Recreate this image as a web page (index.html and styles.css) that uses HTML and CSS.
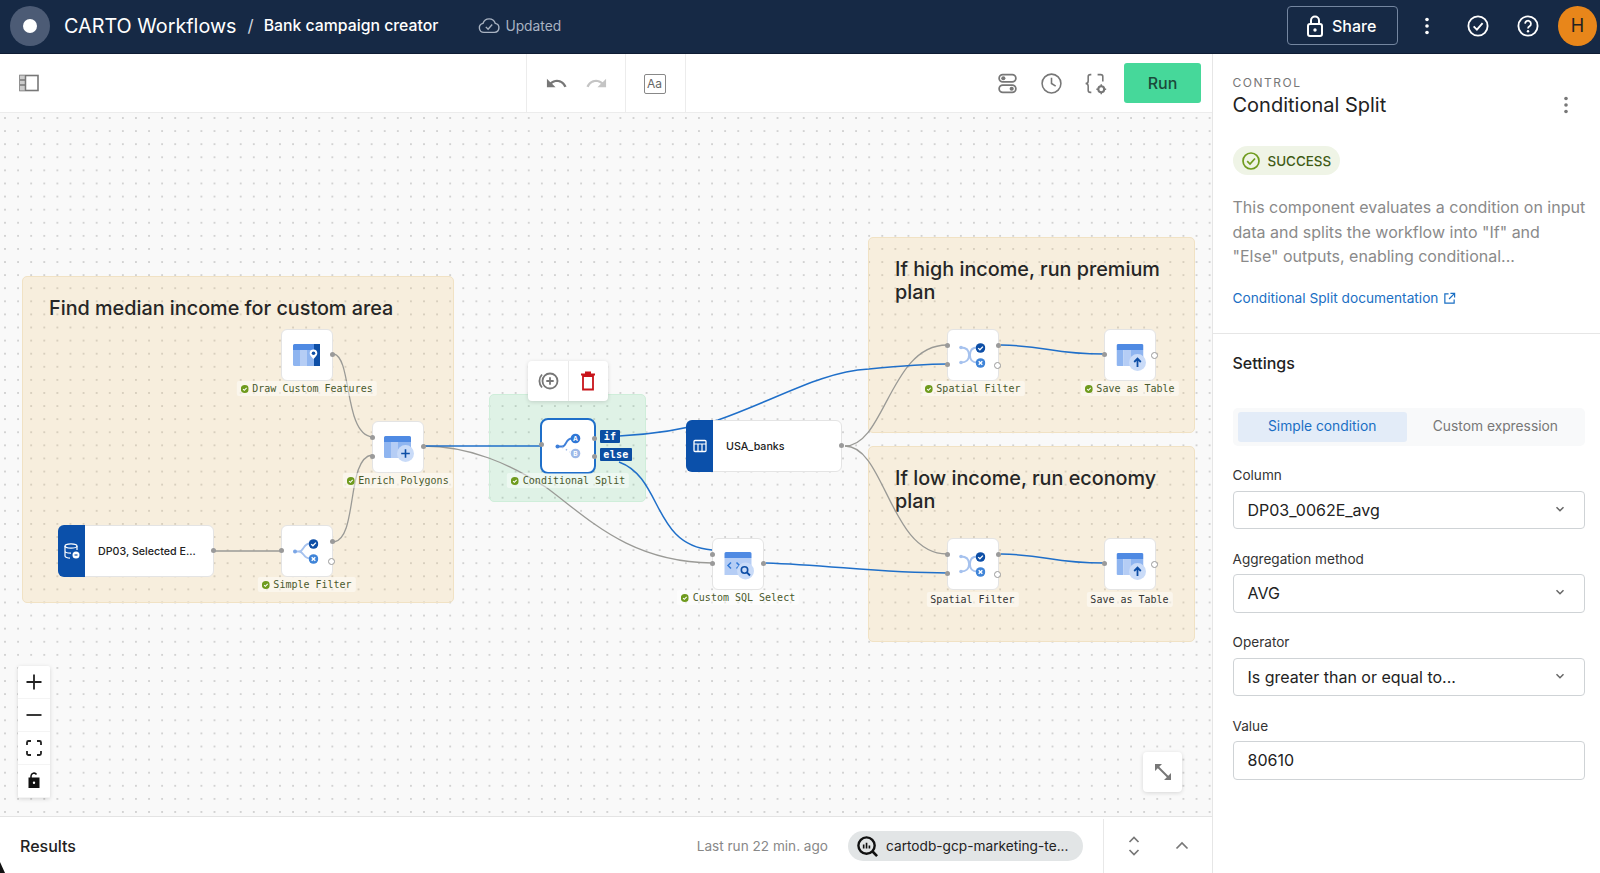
FILE: index.html
```html
<!DOCTYPE html>
<html lang="en">
<head>
<meta charset="utf-8">
<title>CARTO Workflows</title>
<link rel="stylesheet" href="styles.css">
</head>
<body>
<svg class="defs" width="0" height="0" aria-hidden="true">
  <defs>
    <symbol id="ok" viewBox="0 0 10 10"><circle cx="5" cy="5" r="5" fill="#6f9b1e"/><path d="M2.8 5.1 4.4 6.7 7.3 3.6" fill="none" stroke="#fff" stroke-width="1.3"/></symbol>
    <symbol id="table" viewBox="0 0 27 22"><path d="M1.5 0h24A1.5 1.5 0 0 1 27 1.5V6H0V1.500A1.500 1.500 0 0 1 1.500 0z" fill="#4f8ae3"/><path d="M0 6h7v16H1.500A1.500 1.500 0 0 1 0 20.500z" fill="#8fb5f0"/><path d="M7 6h7v16H7z" fill="#b5cdf5"/><path d="M14 6h13v14.500a1.500 1.500 0 0 1-1.500 1.500H14z" fill="#8fb5f0"/></symbol>
    <symbol id="chev" viewBox="0 0 12 12"><path d="M2.500 4.200 6 7.700l3.500-3.500" fill="none" stroke="#666" stroke-width="1.500"/></symbol>
    <symbol id="filtercheck" viewBox="0 0 10 10"><circle cx="5" cy="5" r="4.800" fill="#0d4ea6"/><path d="M2.700 5.100 4.400 6.800 7.400 3.600" fill="none" stroke="#fff" stroke-width="1.300"/></symbol>
    <symbol id="filterx" viewBox="0 0 10 10"><circle cx="5" cy="5" r="4.800" fill="#3f84d8"/><path d="M3.200 3.200 6.800 6.800M6.800 3.200 3.200 6.800" fill="none" stroke="#fff" stroke-width="1.400"/></symbol>
    <symbol id="spatial" viewBox="0 0 32 32"><path d="M4 8.500C10 8.500 12 11 12 16S10 23.500 4 23.500M20 8.500C15 8.500 13 11 13 16S15 23.500 20 23.500" fill="none" stroke="#a6c2ee" stroke-width="1.800"/><circle cx="4" cy="8.500" r="1.800" fill="#a6c2ee"/><circle cx="4" cy="23.500" r="1.800" fill="#a6c2ee"/><use href="#filtercheck" x="18.500" y="4" width="10" height="10"/><use href="#filterx" x="18.500" y="19" width="10" height="10"/></symbol>
    <symbol id="save" viewBox="0 0 32 32"><use href="#table" x="2.500" y="5" width="27" height="22"/><circle cx="23.500" cy="23.500" r="8.500" fill="#c9dbf8"/><path d="M23.500 28v-8M20.200 23 23.500 19.600 26.800 23" fill="none" stroke="#0d4ea6" stroke-width="1.800"/></symbol>
  </defs>
</svg>

<div class="app">
  <header class="topbar">
    <div class="logo"><span class="logo-dot"></span></div>
    <span class="app-name">CARTO Workflows</span>
    <span class="slash">/</span>
    <span class="wf-name">Bank campaign creator</span>
    <span class="status">
      <svg class="status-icon" viewBox="0 0 24 18"><path d="M6.500 16.500A5 5 0 0 1 5.500 6.600 7 7 0 0 1 18.800 6.600 5 5 0 0 1 18 16.500z" fill="none" stroke="#a9b3c2" stroke-width="1.500"/><path d="M8.500 10.500 11 13l4.500-5" fill="none" stroke="#a9b3c2" stroke-width="1.500"/></svg>
      Updated
    </span>
    <div class="top-actions">
      <div class="share">
        <svg class="share-icon" viewBox="0 0 20 24"><path d="M6 10V6.500a4 4 0 0 1 8 0V10" fill="none" stroke="#fff" stroke-width="2"/><rect x="3" y="10" width="14" height="12" rx="2" fill="none" stroke="#fff" stroke-width="2"/><circle cx="10" cy="16" r="1.700" fill="#fff"/></svg>
        <span>Share</span>
      </div>
      <svg class="top-dots" viewBox="0 0 6 20"><circle cx="3" cy="3.500" r="1.800" fill="#fff"/><circle cx="3" cy="10" r="1.800" fill="#fff"/><circle cx="3" cy="16.500" r="1.800" fill="#fff"/></svg>
      <svg class="top-icon" viewBox="0 0 22 22"><circle cx="11" cy="11" r="8.800" fill="none" stroke="#fff" stroke-width="1.700"/><path d="M7 11.300 10 14.300 15.200 8.300" fill="none" stroke="#fff" stroke-width="1.700"/></svg>
      <svg class="top-icon" viewBox="0 0 22 22"><circle cx="11" cy="11" r="8.800" fill="none" stroke="#fff" stroke-width="1.700"/><path d="M8.300 8.800A2.700 2.700 0 1 1 12.400 11.200C11.400 11.800 11 12.300 11 13.300" fill="none" stroke="#fff" stroke-width="1.600"/><circle cx="11" cy="15.800" r="1.100" fill="#fff"/></svg>
      <div class="avatar">H</div>
    </div>
  </header>

  <div class="main">
    <div class="work">
      <div class="toolbar">
        <div class="tb-left">
          <svg class="tb-side" viewBox="0 0 20 18"><rect x="1" y="1.500" width="18" height="15" fill="none" stroke="#777" stroke-width="1.600"/><rect x="1" y="1.500" width="5" height="15" fill="#ccc"/><path d="M6.500 1.500v15" stroke="#777" stroke-width="1.500"/><path d="M1 6h5M1 11h5" stroke="#777" stroke-width="1.300"/></svg>
        </div>
        <div class="tb-history">
          <svg class="tb-icon" viewBox="0 0 24 24"><path fill="#777" d="M12.500 8c-2.650 0-5.050.99-6.900 2.600L2 7v9h9l-3.620-3.620c1.390-1.160 3.160-1.880 5.120-1.880 3.540 0 6.550 2.310 7.600 5.500l2.370-.78C21.080 11.030 17.150 8 12.500 8z"/></svg>
          <svg class="tb-icon" viewBox="0 0 24 24"><path fill="#c4c4c4" d="M18.400 10.600C16.550 8.990 14.150 8 11.500 8c-4.650 0-8.580 3.030-9.960 7.220L3.900 16c1.050-3.190 4.050-5.500 7.600-5.500 1.950 0 3.730.72 5.120 1.880L13 16h9V7l-3.600 3.600z"/></svg>
        </div>
        <div class="tb-text"><span class="aa">Aa</span></div>
        <div class="tb-right">
          <svg class="tb-icon" viewBox="0 0 22 22"><rect x="3" y="2.500" width="16" height="7" rx="3.500" fill="none" stroke="#777" stroke-width="1.700"/><rect x="3" y="12.500" width="16" height="7" rx="3.500" fill="none" stroke="#777" stroke-width="1.700"/><circle cx="7" cy="6" r="2" fill="#777"/><circle cx="15" cy="16" r="2" fill="#777"/></svg>
          <svg class="tb-icon" viewBox="0 0 22 22"><circle cx="11" cy="11" r="9" fill="none" stroke="#777" stroke-width="1.500"/><path d="M11 5.500V11l4 2.500" fill="none" stroke="#777" stroke-width="1.500"/></svg>
          <svg class="tb-icon" viewBox="0 0 22 22"><path d="M7 2.500H6C4.500 2.500 4 3.300 4 4.500V8.500C4 10 3 11 1.500 11 3 11 4 12 4 13.500V17.500C4 18.700 4.500 19.500 6 19.500H7M13 2.500H16C17.500 2.500 18 3.300 18 4.500V9" fill="none" stroke="#777" stroke-width="1.500"/><circle cx="16.500" cy="16.500" r="2.800" fill="none" stroke="#777" stroke-width="2"/><path d="M16.500 11.800v2M16.500 19.200v2M11.800 16.500h2M19.200 16.500h2" stroke="#777" stroke-width="1.400"/></svg>
          <div class="run">Run</div>
        </div>
      </div>

      <div class="canvas">
        <div class="group g-income"><h3>Find median income for custom area</h3></div>
        <div class="group g-high"><h3>If high income, run premium plan</h3></div>
        <div class="group g-low"><h3>If low income, run economy plan</h3></div>
        <div class="selection"></div>

        <svg class="edges" viewBox="0 113 1212 704" width="1212" height="704">
          <g class="edge-grey">
            <path d="M334 354C352 358 344 434 372 437"/>
            <path d="M334 542C358 538 346 458 372 455"/>
            <path d="M213 551H281"/>
            <path d="M423 446C470 446 510 464 547 488 C590 520 630 562 712 563"/>
            <path d="M845 446C885 446 890 345 947 345"/>
            <path d="M845 446C885 446 890 554 947 554"/>
          </g>
          <g class="edge-blue">
            <path d="M423 446H540"/>
            <path d="M619 436C660 434 690 428 718 420C780 398 820 372 869 369C900 366 925 364 947 364"/>
            <path d="M619 462C663 478 652 545 712 550"/>
            <path d="M766 563C830 565 880 573 947 573"/>
            <path d="M1001 345C1050 346 1050 354 1104 354"/>
            <path d="M1001 554C1050 555 1050 563 1104 563"/>
          </g>
        </svg>

        <div class="node n-draw">
          <svg class="nicon" viewBox="0 0 32 32"><use href="#table" x="2" y="5" width="27" height="22"/><rect x="23" y="5" width="6" height="22" fill="#0d4ea6"/><path d="M22.500 10.500a3.800 3.800 0 0 1 3.800 3.800c0 2.400-3.800 5.700-3.800 5.700s-3.800-3.300-3.800-5.700a3.800 3.800 0 0 1 3.800-3.800z" fill="#fff"/><circle cx="22.500" cy="14.300" r="1.800" fill="#0d4ea6"/></svg>
          <i class="port pr pm"></i>
          <div class="nlabel"><svg class="okic"><use href="#ok"/></svg>Draw Custom Features</div>
        </div>

        <div class="node n-enrich">
          <svg class="nicon" viewBox="0 0 32 32"><use href="#table" x="2" y="5" width="27" height="22"/><circle cx="23.500" cy="22.500" r="8.500" fill="#c9dbf8"/><path d="M23.500 18.200v8.600M19.200 22.500h8.600" stroke="#0d4ea6" stroke-width="1.600"/></svg>
          <i class="port pl pa"></i><i class="port pl pb"></i><i class="port pr pm"></i>
          <div class="nlabel"><svg class="okic"><use href="#ok"/></svg>Enrich Polygons</div>
        </div>

        <div class="node n-simple">
          <svg class="nicon" viewBox="0 0 32 32"><path d="M3.500 16.500H8C13 16.500 12 8.500 19 8.500M8 16.500C13 16.500 12 23.500 19 23.500" fill="none" stroke="#a6c2ee" stroke-width="1.800"/><circle cx="4" cy="16.500" r="2" fill="#7ba6e6"/><use href="#filtercheck" x="17.500" y="4" width="10" height="10"/><use href="#filterx" x="17.500" y="19" width="10" height="10"/></svg>
          <i class="port pl pm"></i><i class="port pr pa"></i><i class="port-open pr pb"></i>
          <div class="nlabel"><svg class="okic"><use href="#ok"/></svg>Simple Filter</div>
        </div>

        <div class="node node-wide n-dp03">
          <div class="nside">
            <svg class="side-db" viewBox="0 0 16 16"><ellipse cx="7" cy="3" rx="6" ry="2.200" fill="none" stroke="#fff" stroke-width="1.200"/><path d="M1 3v10c0 1.200 2.700 2.200 5 2.200M13 3v4M1 8c0 1.200 2.700 2.200 6 2.200" fill="none" stroke="#fff" stroke-width="1.200"/><circle cx="12" cy="12" r="3.500" fill="#fff"/><path d="M10.500 12h3" stroke="#0b50aa" stroke-width="1.200"/></svg>
          </div>
          <span class="ntitle">DP03, Selected E...</span>
          <i class="port pr pm"></i>
        </div>

        <div class="node n-split">
          <svg class="nicon" viewBox="0 0 32 32"><path d="M6 16.500H10C15 16.500 13 8.500 20 8.500" fill="none" stroke="#3e7fd9" stroke-width="1.800"/><path d="M10 17 18 22" fill="none" stroke="#9db9e8" stroke-width="1.400" stroke-dasharray="1.500 3"/><circle cx="5.500" cy="16.500" r="2" fill="#3e7fd9"/><circle cx="23.500" cy="8.500" r="4.800" fill="#2f77d6"/><circle cx="23.500" cy="23.500" r="4.800" fill="#9db9e8"/><text class="ab" x="23.500" y="10.800">A</text><text class="ab" x="23.500" y="25.800">B</text></svg>
          <i class="port pl pm"></i>
          <i class="port pr pif"></i><i class="port pr pelse"></i>
          <span class="tag tag-if">if</span>
          <span class="tag tag-else">else</span>
          <div class="nlabel"><svg class="okic"><use href="#ok"/></svg>Conditional Split</div>
        </div>

        <div class="popover">
          <div class="pop-cell">
            <svg class="pop-icon" viewBox="0 0 24 24"><circle cx="14" cy="12" r="7.500" fill="none" stroke="#777" stroke-width="1.800"/><path d="M14 8.300v7.400M10.300 12h7.400" stroke="#777" stroke-width="1.800"/><path d="M6 5.500a9.500 9.500 0 0 0 0 13" fill="none" stroke="#777" stroke-width="1.800"/></svg>
          </div>
          <div class="pop-cell pop-del">
            <svg class="pop-icon" viewBox="0 0 24 24"><path d="M7 7h10v13.500H7z" fill="none" stroke="#c8141a" stroke-width="1.800"/><path d="M5 5.500h14M9 3.500h6" stroke="#c8141a" stroke-width="1.800"/></svg>
          </div>
        </div>

        <div class="node node-wide n-usa">
          <div class="nside">
            <svg class="side-table" viewBox="0 0 14 14"><rect x="1" y="1.500" width="12" height="11" rx="1" fill="none" stroke="#fff" stroke-width="1.300"/><path d="M1 5h12M5 5v7.500M9 5v7.500" stroke="#fff" stroke-width="1.200"/></svg>
          </div>
          <span class="ntitle">USA_banks</span>
          <i class="port pr pm"></i>
        </div>

        <div class="node n-sql">
          <svg class="nicon" viewBox="0 0 32 32"><path d="M2.500 5.500a1.500 1.500 0 0 1 1.500-1.500h24a1.500 1.500 0 0 1 1.500 1.500V10h-27z" fill="#4f8ae3"/><rect x="2.500" y="10" width="27" height="17" fill="#b5cdf5"/><path d="M9 14.500 6 17.500 9 20.500M14.500 14.500 17.500 17.500 14.500 20.500" fill="none" stroke="#2f77d6" stroke-width="1.500"/><circle cx="23.500" cy="23" r="8.500" fill="#c9dbf8"/><circle cx="22.500" cy="22" r="3.200" fill="none" stroke="#0d4ea6" stroke-width="1.600"/><path d="M25 24.500 28 27.500" stroke="#0d4ea6" stroke-width="1.800"/></svg>
          <i class="port pl pa"></i><i class="port pl pm"></i><i class="port pr pm"></i>
          <div class="nlabel"><svg class="okic"><use href="#ok"/></svg>Custom SQL Select</div>
        </div>

        <div class="node n-spatial1">
          <svg class="nicon"><use href="#spatial"/></svg>
          <i class="port pl pa"></i><i class="port pl pb"></i><i class="port pr pa"></i><i class="port-open pr pb"></i>
          <div class="nlabel"><svg class="okic"><use href="#ok"/></svg>Spatial Filter</div>
        </div>
        <div class="node n-save1">
          <svg class="nicon"><use href="#save"/></svg>
          <i class="port pl pm"></i><i class="port-open pr pm"></i>
          <div class="nlabel"><svg class="okic"><use href="#ok"/></svg>Save as Table</div>
        </div>
        <div class="node n-spatial2">
          <svg class="nicon"><use href="#spatial"/></svg>
          <i class="port pl pa"></i><i class="port pl pb"></i><i class="port pr pa"></i><i class="port-open pr pb"></i>
          <div class="nlabel">Spatial Filter</div>
        </div>
        <div class="node n-save2">
          <svg class="nicon"><use href="#save"/></svg>
          <i class="port pl pm"></i><i class="port-open pr pm"></i>
          <div class="nlabel">Save as Table</div>
        </div>

        <div class="zoomctl">
          <div class="zcell"><svg class="zicon" viewBox="0 0 18 18"><path d="M9 1.500v15M1.500 9h15" stroke="#222" stroke-width="1.800"/></svg></div>
          <div class="zcell"><svg class="zicon" viewBox="0 0 18 18"><path d="M1.500 9h15" stroke="#222" stroke-width="1.800"/></svg></div>
          <div class="zcell"><svg class="zicon" viewBox="0 0 18 18"><path d="M2 6V3.500A1.500 1.500 0 0 1 3.500 2H6M12 2h2.500A1.500 1.500 0 0 1 16 3.500V6M16 12v2.500a1.500 1.500 0 0 1-1.500 1.500H12M6 16H3.500A1.500 1.500 0 0 1 2 14.500V12" fill="none" stroke="#222" stroke-width="1.800"/></svg></div>
          <div class="zcell"><svg class="zicon" viewBox="0 0 18 18"><path d="M6 6V4a3 3 0 0 1 5.500-1.500" fill="none" stroke="#111" stroke-width="1.500"/><path fill-rule="evenodd" d="M3.500 5.500h11v10.500h-11zM9 9.500a1.200 1.200 0 1 0 0 2.400 1.200 1.200 0 0 0 0-2.400z" fill="#111"/></svg></div>
        </div>
        <div class="expand">
          <svg class="expand-icon" viewBox="0 0 20 20"><path d="M3 3 17 17" stroke="#777" stroke-width="2"/><path d="M2 9V2h7zM18 11v7h-7z" fill="#777"/></svg>
        </div>
      </div>

      <div class="results">
        <span class="res-title">Results</span>
        <span class="res-time">Last run 22 min. ago</span>
        <div class="conn">
          <svg class="conn-icon" viewBox="0 0 24 24"><circle cx="11" cy="11" r="8.500" fill="none" stroke="#111" stroke-width="2.500"/><path d="M17 17 22 22" stroke="#111" stroke-width="2.800"/><path d="M8 10v4M11 8v6M14 11v3" stroke="#111" stroke-width="1.700"/></svg>
          <span>cartodb-gcp-marketing-te...</span>
        </div>
        <div class="res-actions">
          <svg class="res-icon" viewBox="0 0 16 22"><path d="M3.500 7 8 2.500 12.500 7M3.500 15 8 19.500 12.500 15" fill="none" stroke="#777" stroke-width="1.700"/></svg>
          <svg class="res-icon" viewBox="0 0 16 22"><path d="M2.500 13.500 8 8 13.500 13.500" fill="none" stroke="#777" stroke-width="1.700"/></svg>
        </div>
      </div>
    </div>

    <aside class="panel">
      <div class="panel-info">
        <div class="eyebrow">CONTROL</div>
        <div class="panel-head">
          <div class="panel-title">Conditional Split</div>
          <svg class="panel-dots" viewBox="0 0 6 20"><circle cx="3" cy="3.500" r="1.800" fill="#777"/><circle cx="3" cy="10" r="1.800" fill="#777"/><circle cx="3" cy="16.500" r="1.800" fill="#777"/></svg>
        </div>
        <div class="chip">
          <svg class="chip-icon" viewBox="0 0 20 20"><circle cx="10" cy="10" r="8" fill="none" stroke="#6f9b1e" stroke-width="1.700"/><path d="M6.200 10.200 9 13 14 7.500" fill="none" stroke="#6f9b1e" stroke-width="1.700"/></svg>
          SUCCESS
        </div>
        <p class="desc">This component evaluates a condition on input data and splits the workflow into "If" and "Else" outputs, enabling conditional...</p>
        <div class="doc-link">Conditional Split documentation
          <svg class="doc-icon" viewBox="0 0 14 14"><path d="M6 2H2v10h10V8M8 1.500h4.500V6M12.300 1.700 6.500 7.500" fill="none" stroke="#1a6fc4" stroke-width="1.300"/></svg>
        </div>
      </div>
      <div class="settings">
        <div class="settings-title">Settings</div>
        <div class="segment">
          <div class="seg seg-on">Simple condition</div>
          <div class="seg">Custom expression</div>
        </div>
        <div class="field">
          <div class="flabel">Column</div>
          <div class="control">DP03_0062E_avg<svg class="chev"><use href="#chev"/></svg></div>
        </div>
        <div class="field">
          <div class="flabel">Aggregation method</div>
          <div class="control">AVG<svg class="chev"><use href="#chev"/></svg></div>
        </div>
        <div class="field">
          <div class="flabel">Operator</div>
          <div class="control">Is greater than or equal to...<svg class="chev"><use href="#chev"/></svg></div>
        </div>
        <div class="field">
          <div class="flabel">Value</div>
          <div class="control">80610</div>
        </div>
      </div>
    </aside>
  </div>
  <div class="corner"></div>
</div>
</body>
</html>
```

FILE: styles.css
```css
* { box-sizing: border-box; }
html, body { margin: 0; padding: 0; height: 873px; overflow: hidden; }
body { font-family: Inter, "Liberation Sans", sans-serif; color: #222; background: #fff; }
.defs { position: absolute; }

.app { position: relative; display: flex; flex-direction: column; height: 873px; }
.corner { position: absolute; left: 0; bottom: 0; width: 5px; height: 11px; background: #111; clip-path: polygon(0 0, 100% 100%, 0 100%); }

/* top bar */
.topbar { display: flex; align-items: center; height: 54px; flex: none; background: #162945; border-bottom: 1px solid #0e1c33; color: #fff; padding: 0 0 2px 10px; }
.logo { width: 40px; height: 40px; border-radius: 50%; background: #4c5b75; display: flex; align-items: center; justify-content: center; }
.logo-dot { width: 14px; height: 14px; border-radius: 50%; background: #fff; }
.app-name { font-size: 19.800px; font-weight: 400; margin-left: 14px; }
.slash { font-size: 17px; color: #cfd5de; margin-left: 11px; }
.wf-name { font-size: 15.800px; font-weight: 500; margin-left: 10px; }
.status { display: flex; align-items: center; gap: 5px; font-size: 13.800px; color: #a9b3c2; margin-left: 40px; }
.status-icon { width: 22px; height: 17px; }
.top-actions { display: flex; align-items: center; margin-left: auto; height: 100%; }
.share { display: flex; align-items: center; width: 111px; height: 39px; padding-left: 17px; gap: 7px; border: 1px solid #7486a0; border-radius: 4px; font-size: 16px; font-weight: 500; }
.share-icon { width: 20px; height: 24px; }
.top-dots { width: 6px; height: 20px; margin-left: 26px; margin-right: 10px; }
.top-icon { width: 24px; height: 24px; margin-left: 26px; }
.avatar { width: 39px; height: 40px; border-radius: 50%; background: #e8861a; color: #222; font-size: 18px; display: flex; align-items: center; justify-content: center; margin-left: 18px; margin-right: 3px; }

/* layout */
.main { display: flex; flex: 1; min-height: 0; }
.work { width: 1213px; flex: none; display: flex; flex-direction: column; border-right: 1px solid #e6e6e6; }

/* toolbar */
.toolbar { display: flex; align-items: stretch; height: 59px; flex: none; background: #fff; border-bottom: 1px solid #ececec; }
.tb-left { width: 526px; display: flex; align-items: center; padding-left: 19px; }
.tb-side { width: 20px; height: 18px; }
.tb-history { width: 99px; display: flex; align-items: center; justify-content: center; gap: 17px; border-left: 1px solid #ececec; }
.tb-text { width: 61px; display: flex; align-items: center; justify-content: center; padding: 2px 2px 0 0; border-left: 1px solid #ececec; border-right: 1px solid #ececec; }
.aa { width: 22px; height: 20px; border: 1.500px solid #888; border-radius: 2px; font-size: 12px; line-height: 17px; text-align: center; color: #666; }
.tb-icon { width: 23px; height: 23px; }
.tb-right { flex: 1; display: flex; align-items: center; justify-content: flex-end; gap: 21px; padding-right: 11px; }
.run { width: 77px; height: 40px; margin-left: -4px; background: #46d89a; border-radius: 3px; color: #1b4a3a; font-size: 16px; font-weight: 500; display: flex; align-items: center; justify-content: center; }

/* canvas */
.canvas { position: relative; flex: 1; min-height: 0; overflow: hidden; background-color: #f9f9f9; background-image: radial-gradient(circle, #d2d2d2 0.7px, transparent 1.1px); background-size: 13.1px 13.1px; background-position: -1.550px -1.550px; }
.group { position: absolute; border: 1px solid #f1e2c4; border-radius: 5px; background: rgba(240, 196, 110, 0.2); }
.group h3 { margin: 0; font-size: 19.800px; line-height: 22.500px; font-weight: 500; color: #262626; }
.g-income { left: 22px; top: 163px; width: 432px; height: 327px; padding: 20px 26px; }
.g-high { left: 868px; top: 124px; width: 327px; height: 196px; padding: 20px 26px; }
.g-low { left: 868px; top: 333px; width: 327px; height: 196px; padding: 20px 26px; }
.selection { position: absolute; left: 489px; top: 281px; width: 157px; height: 108px; background: rgba(95, 205, 135, 0.17); border: 1px solid #cfeeda; border-radius: 5px; }
.edges { position: absolute; left: 0; top: 0; }
.edges path { fill: none; }
.edge-grey path { stroke: #9a9a96; stroke-width: 1.300; }
.edge-blue path { stroke: #1f6fc9; stroke-width: 1.500; }

.node { position: absolute; width: 52px; height: 52px; background: #fff; border: 1px solid #e4e4e4; border-radius: 6px; display: flex; align-items: center; justify-content: center; }
.nicon { width: 32px; height: 32px; }
.node-wide { justify-content: flex-start; }
.nside { width: 27px; height: 52px; margin: -1px 0 -1px -1px; background: #0b50aa; border-radius: 6px 0 0 6px; display: flex; align-items: center; justify-content: center; flex: none; }
.side-db { width: 16px; height: 16px; }
.side-table { width: 14px; height: 14px; }
.ntitle { font-size: 10.700px; font-weight: 500; color: #222; margin-left: 13px; white-space: nowrap; }

.n-draw { left: 280.500px; top: 216px; }
.n-enrich { left: 371.500px; top: 308px; }
.n-simple { left: 280.500px; top: 412px; }
.n-dp03 { left: 58px; top: 412px; width: 156px; }
.n-split { left: 540px; top: 305px; width: 56px; height: 56px; border: 2px solid #1f6fc9; border-radius: 8px; }
.n-usa { left: 686px; top: 307px; width: 156px; }
.n-sql { left: 712px; top: 425px; }
.n-spatial1 { left: 946.500px; top: 216px; }
.n-save1 { left: 1103.500px; top: 216px; }
.n-spatial2 { left: 946.500px; top: 425px; }
.n-save2 { left: 1103.500px; top: 425px; }

.port { position: absolute; width: 5px; height: 5px; border-radius: 50%; background: #9a9a9a; }
.port-open { position: absolute; width: 7px; height: 7px; border-radius: 50%; background: #fff; border: 1px solid #9a9a9a; }
.pl { left: -3px; }
.pr { right: -3px; }
.pm { top: 22px; }
.pa { top: 13px; }
.pb { top: 32px; }
.pif { top: 16px; }
.pelse { top: 34px; }

.nlabel { position: absolute; top: 100%; left: 50%; transform: translateX(-50%); margin-top: 1px; padding: 1px 4px; display: flex; align-items: center; gap: 4px; white-space: nowrap; font-family: "DejaVu Sans Mono", "Liberation Mono", monospace; font-size: 10px; line-height: 13px; color: #4a5a2c; background: rgba(255, 255, 255, 0.45); border-radius: 2px; }
.n-spatial2 .nlabel, .n-save2 .nlabel { color: #333; margin-top: 3px; }
.okic { width: 8px; height: 8px; flex: none; }
.ab { font-family: Inter, sans-serif; font-size: 6.500px; font-weight: 700; fill: #fff; text-anchor: middle; }
.tag { position: absolute; height: 13px; background: #0b4ea2; color: #fff; font-family: "DejaVu Sans Mono", monospace; font-size: 10px; font-weight: 700; line-height: 13px; letter-spacing: 0.300px; padding: 0 3px; border-radius: 1px; left: 58px; }
.tag-if { top: 10px; width: 20px; text-align: center; }
.tag-else { top: 28px; width: 32px; text-align: center; }

.popover { position: absolute; left: 528px; top: 248px; width: 80px; height: 40px; display: flex; background: #fff; border-radius: 4px; box-shadow: 0 1px 4px rgba(0, 0, 0, 0.14); }
.pop-cell { flex: 1; display: flex; align-items: center; justify-content: center; }
.pop-del { border-left: 1px solid #eaeaea; }
.pop-icon { width: 24px; height: 24px; }

.zoomctl { position: absolute; left: 18px; top: 553px; width: 32px; background: #fff; box-shadow: 0 1px 4px rgba(0, 0, 0, 0.15); border-radius: 2px; }
.zcell { height: 33px; display: flex; align-items: center; justify-content: center; border-bottom: 1px solid #f4f4f4; }
.zicon { width: 18px; height: 18px; }
.expand { position: absolute; left: 1143px; top: 639px; width: 39px; height: 40px; background: #fff; border-radius: 4px; box-shadow: 0 1px 4px rgba(0, 0, 0, 0.14); display: flex; align-items: center; justify-content: center; }
.expand-icon { width: 20px; height: 20px; }

/* results */
.results { display: flex; align-items: center; height: 57px; flex: none; background: #fff; border-top: 1px solid #e4e4e4; padding: 2px 0 0 20px; }
.res-title { font-size: 16px; font-weight: 500; color: #222; }
.res-time { margin-left: auto; font-size: 13.600px; color: #888; }
.conn { display: flex; align-items: center; gap: 7px; width: 235px; height: 30px; margin-left: 20px; padding-left: 8px; background: #e2e5e6; border-radius: 15px; font-size: 13.700px; color: #222; }
.conn-icon { width: 23px; height: 23px; }
.res-actions { display: flex; align-items: center; justify-content: space-between; width: 109px; height: 100%; margin-left: 20px; border-left: 1px solid #e8e8e8; padding: 0 22px 0 22px; }
.res-icon { width: 16px; height: 22px; }

/* panel */
.panel { flex: 1; min-width: 0; background: #fff; }
.panel-info { padding: 21px 10px 25px 19.500px; border-bottom: 1px solid #e6e6e6; }
.eyebrow { font-size: 12px; line-height: 16px; letter-spacing: 1.500px; color: #777; }
.panel-head { display: flex; align-items: center; justify-content: space-between; height: 28px; padding-right: 21px; }
.panel-title { font-size: 20px; line-height: 28px; color: #222; }
.panel-dots { width: 6px; height: 20px; }
.chip { display: inline-flex; align-items: center; gap: 7px; height: 29px; margin-top: 27px; padding: 0 9px 0 8px; background: #eff4e6; border-radius: 15px; font-size: 13.400px; font-weight: 500; color: #3f5a14; vertical-align: top; }
.chip-icon { width: 20px; height: 20px; }
.desc { margin: 20px 0 0; font-size: 16px; line-height: 24.500px; color: #8a8a8a; }
.doc-link { display: flex; align-items: center; gap: 5px; margin-top: 19.500px; font-size: 13.700px; line-height: 20px; color: #1a6fc4; }
.doc-icon { width: 13px; height: 13px; }
.settings { padding: 17.500px 15px 0 19.500px; }
.settings-title { font-size: 16px; line-height: 22px; font-weight: 500; color: #222; }
.segment { display: flex; height: 38px; margin-top: 34px; padding: 4px 5px; gap: 4px; background: #f8f9fa; border-radius: 5px; }
.seg { flex: 1; display: flex; align-items: center; justify-content: center; font-size: 13.800px; line-height: 18px; padding-bottom: 1px; font-weight: 400; color: #777; border-radius: 3px; }
.seg-on { background: #e3ecf8; color: #1a6fc4; }
.field { margin-top: 19.500px; }
.flabel { font-size: 13.600px; line-height: 20px; color: #333; margin-bottom: 5.500px; }
.control { position: relative; height: 38.500px; padding-left: 14px; display: flex; align-items: center; border: 1px solid #cfd3d6; border-radius: 4px; font-size: 16px; color: #222; }
.chev { position: absolute; right: 18px; top: 11px; width: 12px; height: 12px; }
```
